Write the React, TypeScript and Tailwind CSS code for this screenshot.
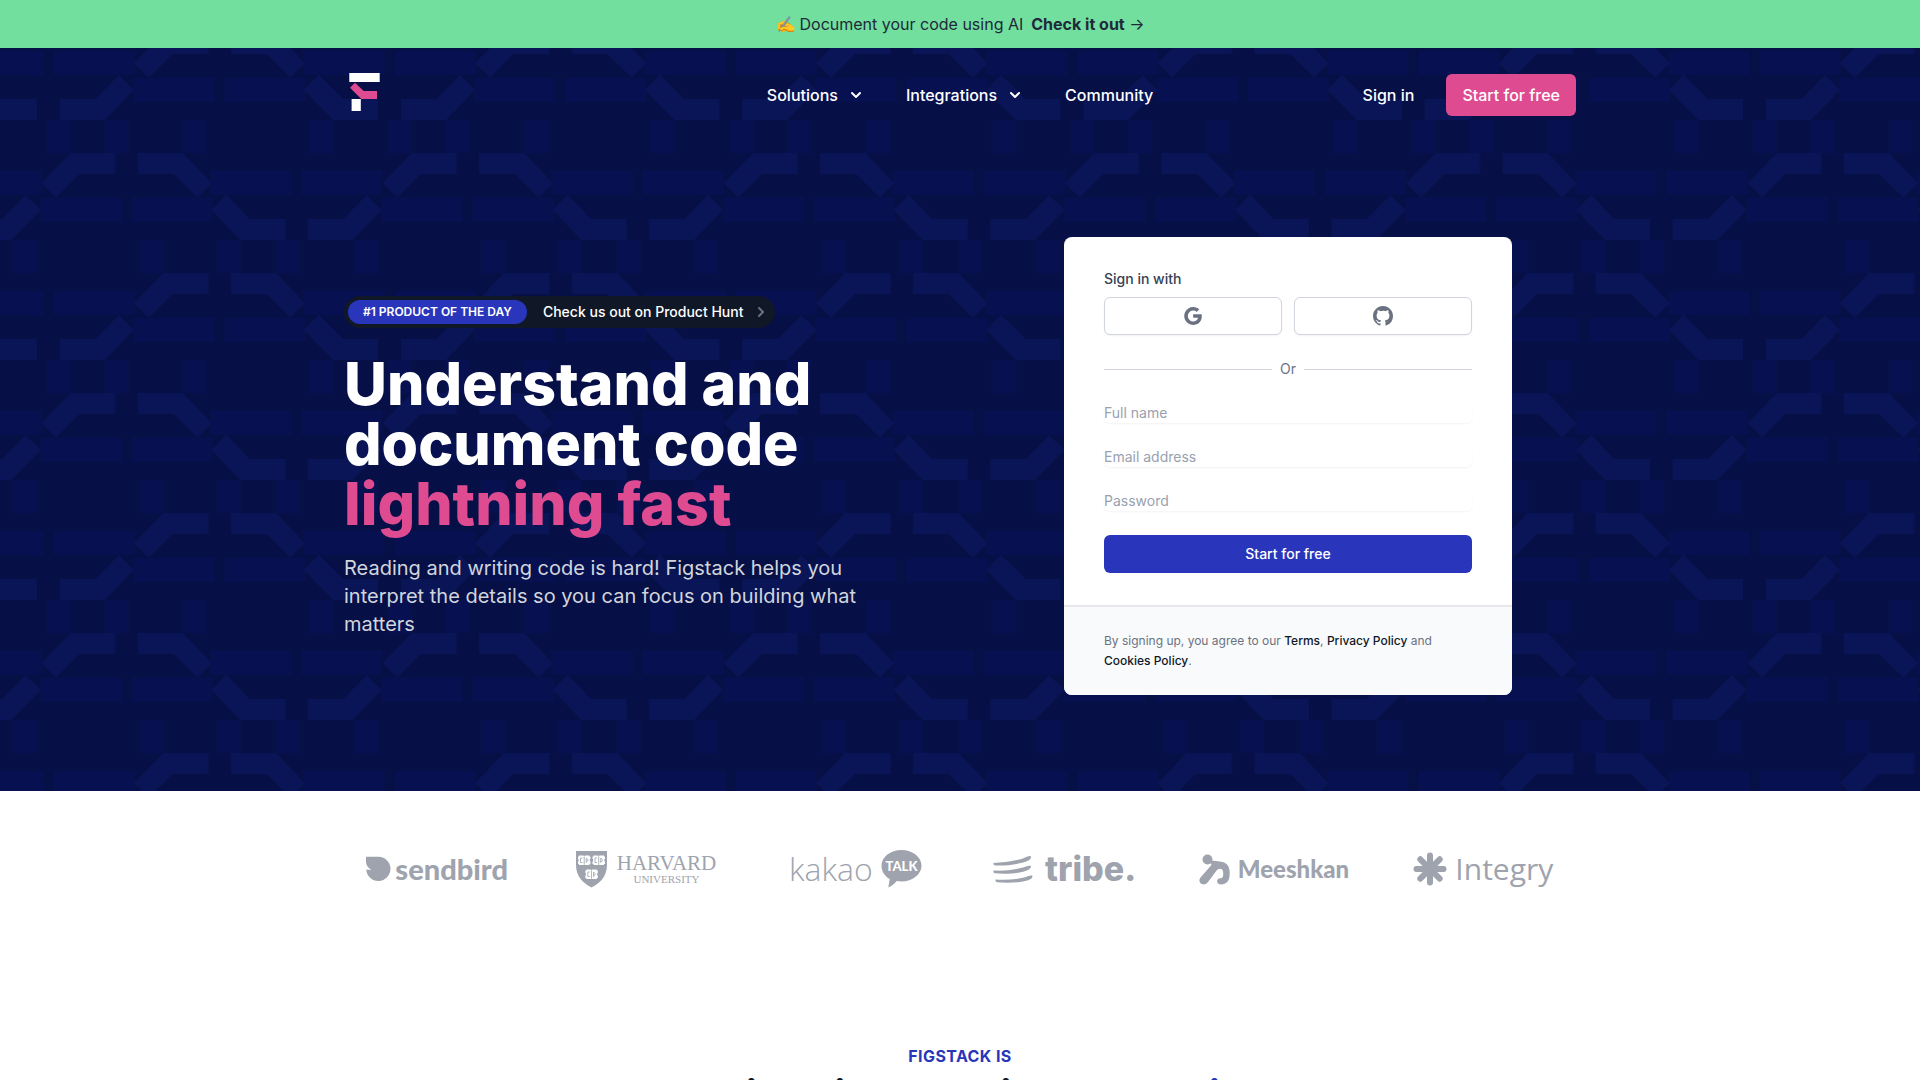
import React from "react";
import { AiOutlineGoogle } from "react-icons/ai";

const BARS = [
  [-117, 392, 240, 72], [633, 392, 240, 72], [123, 473, 240, 72], [396, 473, 240, 72],
  [162, 753, 240, 72], [-111, 753, 240, 72], [912, 753, 240, 72], [401, 834, 240, 72], [674, 834, 240, 72], [906, 392, 240, 72],
  [38, 600, 70, 99], [420, 600, 70, 99], [651, 600, 70, 99], [828, 600, 70, 99],
  [141, 960, 70, 99], [315, 960, 70, 99], [549, 960, 70, 99], [930, 960, 70, 99],
];

const BENDS = [
  "125,430 213,339 345,339 345,402 238,402 168,472",
  "414,339 547,339 635,430 592,472 522,402 414,402",
  "635,510 679,465 748,537 855,537 855,600 722,600",
  "924,537 1031,537 1101,466 1145,510 1058,600 924,600",
  "-100,537 7,537 77,466 121,510 34,600 -100,600",
  "402,790 490,699 624,699 624,762 516,762 446,832",
  "693,699 827,699 914,790 871,832 800,762 693,762",
  "912,870 956,825 1028,897 1134,897 1134,960 1001,960",
  "-112,870 -68,825 4,897 110,897 110,960 -23,960",
  "180,897 287,897 357,826 401,870 314,960 180,960",
];

function HeroPattern() {
  return (
    <svg className="absolute inset-0 h-full w-full" aria-hidden="true">
      <defs>
        <pattern
          id="hero-tiles"
          width="1023.6"
          height="720"
          patternUnits="userSpaceOnUse"
          viewBox="0 339 1023.6 720"
          patternTransform="translate(0 105) scale(0.333333)"
        >
          {BARS.map(([x, y, w, h]) => (
            <rect key={`${x}-${y}`} x={x} y={y} width={w} height={h} fill="#071151" />
          ))}
          {BENDS.map((points) => (
            <polygon key={points} points={points} fill="#091557" />
          ))}
        </pattern>
      </defs>
      <rect width="100%" height="100%" fill="url(#hero-tiles)" />
    </svg>
  );
}

function BrandMark() {
  return (
    <svg width="45" height="45" viewBox="0 0 45 45" aria-hidden="true">
      <path fill="#fff" d="M5.3 1h30.4v9H5.3zM7.6 27h9.2v12H7.6z" />
      <path fill="#de4b91" d="M6 15.7l5-5 8.7 8.3H33v8H17.3z" />
    </svg>
  );
}

function ChevronDown() {
  return (
    <svg className="ml-2 h-5 w-5" viewBox="0 0 20 20" fill="currentColor" aria-hidden="true">
      <path fillRule="evenodd" clipRule="evenodd" d="M5.293 7.293a1 1 0 011.414 0L10 10.586l3.293-3.293a1 1 0 111.414 1.414l-4 4a1 1 0 01-1.414 0l-4-4a1 1 0 010-1.414z" />
    </svg>
  );
}

function ChevronRight() {
  return (
    <svg className="ml-2 h-5 w-5 text-gray-500" viewBox="0 0 20 20" fill="currentColor" aria-hidden="true">
      <path fillRule="evenodd" clipRule="evenodd" d="M7.293 14.707a1 1 0 010-1.414L10.586 10 7.293 6.707a1 1 0 011.414-1.414l4 4a1 1 0 010 1.414l-4 4a1 1 0 01-1.414 0z" />
    </svg>
  );
}

function GithubMark() {
  return (
    <svg className="h-5 w-5" viewBox="0 0 20 20" fill="currentColor" aria-hidden="true">
      <path fillRule="evenodd" clipRule="evenodd" d="M10 0C4.477 0 0 4.484 0 10.017c0 4.425 2.865 8.18 6.839 9.504.5.092.682-.217.682-.483 0-.237-.008-.868-.013-1.703-2.782.605-3.369-1.343-3.369-1.343-.454-1.158-1.11-1.466-1.11-1.466-.908-.62.069-.608.069-.608 1.003.07 1.531 1.032 1.531 1.032.892 1.53 2.341 1.088 2.91.832.092-.647.35-1.088.636-1.338-2.22-.253-4.555-1.113-4.555-4.951 0-1.093.39-1.988 1.029-2.688-.103-.253-.446-1.272.098-2.65 0 0 .84-.27 2.75 1.026A9.564 9.564 0 0110 4.844c.85.004 1.705.115 2.504.337 1.909-1.296 2.747-1.027 2.747-1.027.546 1.379.203 2.398.1 2.651.64.7 1.028 1.595 1.028 2.688 0 3.848-2.339 4.695-4.566 4.942.359.31.678.921.678 1.856 0 1.338-.012 2.419-.012 2.747 0 .268.18.58.688.482A10.019 10.019 0 0020 10.017C20 4.484 15.522 0 10 0z" />
    </svg>
  );
}

function Field({ id, label, type }: { id: string; label: string; type: string }) {
  return (
    <div>
      <label htmlFor={id} className="sr-only">{label}</label>
      <input
        id={id}
        type={type}
        placeholder={label}
        className="block h-5 w-full rounded-md text-sm leading-5 text-gray-900 shadow-[0_1px_2px_0_rgba(0,0,0,0.05)] placeholder:text-gray-400 focus:outline-none"
      />
    </div>
  );
}

function SignupCard() {
  const social =
    "flex h-[38px] items-center justify-center rounded-md border border-gray-300 bg-white text-gray-500 shadow-[0_1px_2px_0_rgba(0,0,0,0.05)]";
  return (
    <div className="w-full max-w-md overflow-hidden rounded-lg bg-white">
      <div className="px-10 py-8">
        <p className="text-sm leading-5 font-medium text-gray-700">Sign in with</p>
        <div className="mt-2 grid grid-cols-2 gap-3">
          <button type="button" aria-label="Sign in with Google" className={social}>
            <AiOutlineGoogle className="h-6 w-6" />
          </button>
          <button type="button" aria-label="Sign in with GitHub" className={social}>
            <GithubMark />
          </button>
        </div>
        <div className="mt-6 flex items-center gap-2">
          <div className="h-px flex-1 bg-gray-300" />
          <span className="text-sm leading-5 text-gray-500">Or</span>
          <div className="h-px flex-1 bg-gray-300" />
        </div>
        <form className="mt-6 flex flex-col gap-6">
          <Field id="name" label="Full name" type="text" />
          <Field id="email" label="Email address" type="email" />
          <Field id="password" label="Password" type="password" />
          <button type="submit" className="h-[38px] rounded-md bg-[#2936bb] text-sm font-medium text-white">
            Start for free
          </button>
        </form>
      </div>
      <div className="border-t-2 border-gray-200 bg-gray-50 px-10 py-6">
        <p className="text-xs leading-5 text-gray-500">
          By signing up, you agree to our{" "}
          <a href="#terms" className="font-medium text-gray-900">Terms</a>,{" "}
          <a href="#privacy" className="font-medium text-gray-900">Privacy Policy</a> and{" "}
          <a href="#cookies" className="block w-fit font-medium text-gray-900">
            Cookies Policy<span className="font-normal text-gray-500">.</span>
          </a>
        </p>
      </div>
    </div>
  );
}

function SendbirdLogo() {
  return (
    <div className="flex items-center gap-1">
      <svg width="26" height="26" viewBox="0 0 26 26" fill="currentColor" aria-hidden="true">
        <path d="M1 .8h12.6A12.1 12.1 0 1 1 1.3 13.4c1.6.5 3.3.5 5 0C3.2 12 1.2 9.5 1 6z" />
      </svg>
      <span className="font-[Lato] text-[29px] leading-10 font-black">sendbird</span>
    </div>
  );
}

function OpenBook({ x, y }: { x: number; y: number }) {
  return (
    <g transform={`translate(${x} ${y})`}>
      <path fill="#fff" d="M0 1h1V0h4.5l.7.7L7 0h4.5v1h1v2.5h-.6V6h.6v2.5h-1v1H7l-.8-.6-.7.6H1v-1H0V6h.6V3.500H0z" />
      <path fill="none" stroke="#9ea3ae" strokeWidth=".8" d="M6.2 1v8M2.500 2.500v4.500M2.500 2.500h2M2.500 7h2M8.200 2.500v4.500M8.200 2.500l2 2-2 2.500" />
    </g>
  );
}

function HarvardLogo() {
  return (
    <div className="flex items-center gap-[10px]">
      <svg width="31" height="37" viewBox="0 0 31 37" aria-hidden="true">
        <path fill="currentColor" d="M0 0h31v14c0 11-7 18.500-15.500 22.500C7 32.500 0 25 0 14z" />
        <OpenBook x={2} y={4.5} />
        <OpenBook x={16.5} y={4.5} />
        <OpenBook x={9.3} y={18.5} />
      </svg>
      <div className="flex flex-col items-center font-['Liberation_Serif']">
        <span className="text-[21px] leading-5">HARVARD</span>
        <span className="text-[11px] leading-3">UNIVERSITY</span>
      </div>
    </div>
  );
}

function KakaoLogo() {
  return (
    <div className="flex items-center gap-2">
      <span className="font-['Open_Sans'] text-[32px] leading-10 font-light">kakao</span>
      <svg width="41" height="38" viewBox="0 0 41 38" aria-hidden="true">
        <path fill="currentColor" d="M20.500 0C31.500 0 40.500 7 40.500 15.700s-9 15.700-20 15.700c-1.700 0-3.300-.1-4.800-.4C13 34 10 36.500 7.300 37.500c.4-2.500 1-5.500 1.400-8.500C3.700 26.200.5 21.300.5 15.700.500 7 9.500 0 20.500 0z" />
        <text x="20.500" y="20.500" textAnchor="middle" fill="#fff" fontFamily="Lato" fontWeight="900" fontSize="13">TALK</text>
      </svg>
    </div>
  );
}

function TribeLogo() {
  return (
    <div className="flex items-center gap-3">
      <svg width="40" height="28" viewBox="0 0 40 28" fill="currentColor" aria-hidden="true">
        <path d="M.5 8C10 7.500 20 6.500 30 3.500c3-1 5-2.500 7.500-2.400C38.500 1.500 38 4 36 5.200 28 9 14 11 2 10.500.5 10.200.2 8.800.5 8z" />
        <path d="M.5 15.500c10 .5 20-.5 29.500-3 3-1 5-2 7.500-1.800 1 .5.300 2.700-1.700 3.800C28 18.500 14 19.300 2 18.300.500 18 .2 16.300.5 15.500z" />
        <path d="M2.500 24.500c9.500.5 19.500.2 28.500-2 3-.800 5-2.300 8-2 1 .600.3 2.800-1.700 3.800C30 27.800 16 28.200 4 27.300 2.500 27 2.200 25.200 2.500 24.500z" />
      </svg>
      <span className="font-[Inter] text-[34px] leading-10 font-extrabold">tribe.</span>
    </div>
  );
}

function MeeshkanLogo() {
  return (
    <div className="flex items-center gap-2">
      <svg width="31" height="31" viewBox="0 0 31 31" aria-hidden="true">
        <circle cx="8.500" cy="5.500" r="5" fill="currentColor" />
        <path fill="currentColor" d="M10 6.500C17 7 22 7 25 8.500c3.500 1.500 5 4 5.500 8 .4 4 .2 8-1.500 10.500-1.500 2.500-5 3.800-8.500 3.300-3.500-.8-3-5.800.5-6 3 0 3.200-1.800 3.200-5 0-3-1-4.500-3-4.500-2 0-3.200 1-4.700 3.200L9 28c-1.500 2.300-4.500 3-6.500 1.800C0 28.500-.2 25.800 1.500 23.500L12 11.500C13 10 12 8.500 9 9.500z" />
      </svg>
      <span className="font-[Lato] text-2xl leading-10 font-black">Meeshkan</span>
    </div>
  );
}

function IntegryLogo() {
  return (
    <div className="flex items-center gap-2">
      <svg width="34" height="34" viewBox="0 0 34 34" stroke="currentColor" strokeWidth="6" strokeLinecap="round" aria-hidden="true">
        <path d="M17 3.500v27M3.500 17h27M7.300 7.300l19.400 19.400M26.700 7.300L7.300 26.700" />
      </svg>
      <span className="font-['Open_Sans'] text-[30px] leading-10">Integry</span>
    </div>
  );
}

export default function App() {
  return (
    <div className="min-h-screen bg-white font-[Inter,sans-serif]">
      <div className="flex h-12 items-center justify-center bg-[#72df9f] text-base text-gray-800">
        <span className="mr-1">✍️</span>
        <span>Document your code using AI</span>
        <a href="#docs" className="ml-2"><strong className="font-bold">Check it out</strong> →</a>
      </div>

      <div className="relative bg-[#071046]">
        <HeroPattern />
        <div className="relative mx-auto max-w-7xl px-6">
          <nav className="flex h-[93px] items-center text-base font-medium text-white" aria-label="Main">
            <div className="flex-1">
              <a href="#home" aria-label="Figstack home" className="block w-fit"><BrandMark /></a>
            </div>
            <div className="flex items-center gap-10">
              <button type="button" className="flex items-center">Solutions<ChevronDown /></button>
              <button type="button" className="flex items-center">Integrations<ChevronDown /></button>
              <a href="#community">Community</a>
            </div>
            <div className="flex flex-1 items-center justify-end gap-8">
              <a href="#signin">Sign in</a>
              <a href="#start" className="flex h-[42px] items-center rounded-md bg-[#de4b91] px-4">Start for free</a>
            </div>
          </nav>

          <div className="grid grid-cols-2 items-center gap-20 py-24">
            <div className="pt-0.5">
              <a href="#producthunt" className="flex h-8 w-fit items-center rounded-full bg-gray-900 px-1 text-white">
                <span className="flex h-6 items-center rounded-full bg-[#2936bb] px-[15px] text-xs font-semibold">
                  #1 PRODUCT OF THE DAY
                </span>
                <span className="ml-4 text-sm leading-5 font-medium">Check us out on Product Hunt</span>
                <ChevronRight />
              </a>
              <h1 className="mt-[26px] text-[59px] leading-[60px] font-extrabold text-white">
                <span className="block">Understand and</span>
                <span className="block">document code</span>
                <span className="block text-[#de4b91]">lightning fast</span>
              </h1>
              <p className="mt-5 max-w-[540px] text-xl leading-7 text-gray-300">
                Reading and writing code is hard! Figstack helps you interpret the details so you can focus on building what matters
              </p>
            </div>
            <div className="flex justify-center">
              <SignupCard />
            </div>
          </div>
        </div>
      </div>

      <div className="mx-auto grid max-w-7xl grid-cols-6 items-center justify-items-center gap-6 px-6 pt-[58px] pb-20 text-[#9ea3ae]">
        <SendbirdLogo />
        <HarvardLogo />
        <KakaoLogo />
        <TribeLogo />
        <MeeshkanLogo />
        <IntegryLogo />
      </div>

      <section className="pt-[75px] pb-20 text-center">
        <p className="text-base leading-6 font-bold tracking-wide text-[#2936bb]">FIGSTACK IS</p>
        <h2 className="text-4xl leading-[50px] font-extrabold text-gray-900">
          Your intelligent coding <span className="text-[#2936bb]">companion</span>
        </h2>
      </section>
    </div>
  );
}
